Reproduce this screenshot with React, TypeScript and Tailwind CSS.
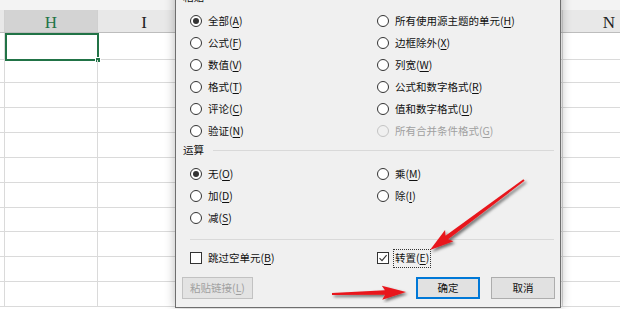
import React from 'react';

const cols = ['G', 'H', 'I', 'J', 'K', 'L', 'M', 'N'];
const rowHeights = ['h-[27px]', 'h-[23px]', 'h-[25px]', 'h-[25px]', 'h-[25px]', 'h-[25px]', 'h-[25px]', 'h-[24px]', 'h-[25px]', 'h-[25px]', 'h-[25px]'];

const pasteLeft = [
  { t: '全部', k: 'A', on: true },
  { t: '公式', k: 'F' },
  { t: '数值', k: 'V' },
  { t: '格式', k: 'T' },
  { t: '评论', k: 'C' },
  { t: '验证', k: 'N' },
];
const pasteRight = [
  { t: '所有使用源主题的单元', k: 'H' },
  { t: '边框除外', k: 'X' },
  { t: '列宽', k: 'W' },
  { t: '公式和数字格式', k: 'R' },
  { t: '值和数字格式', k: 'U' },
  { t: '所有合并条件格式', k: 'G', off: true },
];

function Label({ t, k }: { t: string; k: string }) {
  return (
    <span>
      {t}(<span className="underline underline-offset-[1.5px]">{k}</span>)
    </span>
  );
}

function Radio({ on, off }: { on?: boolean; off?: boolean }) {
  return (
    <span
      className={`w-[12px] h-[12px] shrink-0 rounded-full border flex items-center justify-center ${
        off ? 'border-[#c4c4c4] bg-[#f0f0f0]' : 'border-[#333333] bg-white'
      }`}
    >
      {on && <span className="w-[6px] h-[6px] rounded-full bg-[#333333]" />}
    </span>
  );
}

function RadioRow({ t, k, on, off }: { t: string; k: string; on?: boolean; off?: boolean }) {
  return (
    <div className={`h-[22px] flex items-center gap-[6px] ${off ? 'text-[#a0a0a0]' : 'text-[#111111]'}`}>
      <Radio on={on} off={off} />
      <Label t={t} k={k} />
    </div>
  );
}

function Check({ on }: { on?: boolean }) {
  return (
    <span className="w-[12px] h-[12px] shrink-0 border border-[#333333] bg-white flex items-center justify-center">
      {on && (
        <svg width="10" height="10" viewBox="0 0 10 10">
          <path d="M1.5 5.2 L4 7.6 L8.6 2.2" fill="none" stroke="#333" strokeWidth="1.1" />
        </svg>
      )}
    </span>
  );
}

function Heading({ t }: { t: string }) {
  return (
    <div className="h-[14px] flex items-center gap-[9px] pl-[7px] pr-[6px] text-[#111111]">
      <span>{t}</span>
      <span className="flex-1 h-px bg-[#d9d9d9]" />
    </div>
  );
}

function arrow(x1: number, y1: number, x2: number, y2: number) {
  const len = Math.hypot(x2 - x1, y2 - y1);
  const dx = (x2 - x1) / len, dy = (y2 - y1) / len;
  const nx = -dy, ny = dx;
  const hl = 21, hw = 7, sw = 2.2, tw = 1;
  const bx = x2 - dx * hl, by = y2 - dy * hl;
  const wx = x2 - dx * (hl + 3), wy = y2 - dy * (hl + 3);
  const p = [
    [x1 + nx * tw, y1 + ny * tw],
    [bx + nx * sw, by + ny * sw],
    [wx + nx * hw, wy + ny * hw],
    [x2, y2],
    [wx - nx * hw, wy - ny * hw],
    [bx - nx * sw, by - ny * sw],
    [x1 - nx * tw, y1 - ny * tw],
  ];
  return p.map(q => q.join(',')).join(' ');
}

export default function App() {
  return (
    <div className="relative w-[620px] h-[309px] overflow-hidden bg-white font-['Noto_Sans_CJK_SC',sans-serif] text-[10.5px]">
      {/* sheet */}
      <div className="flex flex-col">
        <div className="h-[10px] bg-[#f3f3f3]" />
        <div className="flex h-[23px] ml-[-88px] border-b border-[#bdbdbd]">
          {cols.map(c => (
            <div
              key={c}
              className={`w-[93px] shrink-0 border-r border-[#d0d0d0] flex items-center justify-center pt-[3px] font-['Liberation_Serif',serif] text-[17px] ${
                c === 'H' ? 'bg-[#d3d3d3] text-[#217346]' : 'bg-[#e8e8e8] text-[#222222]'
              }`}
            >
              {c === 'G' ? '' : c}
            </div>
          ))}
        </div>
        {rowHeights.map((h, r) => (
          <div key={r} className={`flex ml-[-88px] border-b border-[#dadada] ${h}`}>
            {cols.map(c => (
              <div key={c} className="relative w-[93px] shrink-0 border-r border-[#dadada]">
                {r === 0 && c === 'H' && (
                  <div className="absolute left-0 top-0 w-[94px] h-[28px] border-2 border-[#217346]">
                    <span className="absolute right-[-4px] bottom-[-4px] w-[6px] h-[6px] bg-[#217346] border border-white" />
                  </div>
                )}
              </div>
            ))}
          </div>
        ))}
      </div>

      {/* paste special dialog */}
      <div className="absolute left-[175px] top-[-12px] w-[386px] h-[320px] bg-[#f0f0f0] border-x border-b border-[#6e6e6e] shadow-[0_0_10px_rgba(0,0,0,0.28)] flex flex-col">
        <div className="mt-[2px]">
          <Heading t="粘贴" />
        </div>
        <div className="mt-[6px] pl-[14px] grid grid-cols-[187px_1fr]">
          <div className="flex flex-col">
            {pasteLeft.map(o => <RadioRow key={o.k} {...o} />)}
          </div>
          <div className="flex flex-col">
            {pasteRight.map(o => <RadioRow key={o.k} {...o} />)}
          </div>
        </div>
        <div className="mt-[1px]">
          <Heading t="运算" />
        </div>
        <div className="mt-[6px] pl-[14px] grid grid-cols-[187px_1fr]">
          <div className="flex flex-col">
            <RadioRow t="无" k="O" on />
            <RadioRow t="加" k="D" />
            <RadioRow t="减" k="S" />
          </div>
          <div className="flex flex-col">
            <RadioRow t="乘" k="M" />
            <RadioRow t="除" k="I" />
          </div>
        </div>
        <div className="mt-[10px] ml-[14px] mr-[6px] h-px bg-[#d9d9d9]" />
        <div className="mt-[7px] pl-[14px] grid grid-cols-[187px_1fr] text-[#111111]">
          <div className="h-[22px] flex items-center gap-[4px]">
            <Check />
            <span className="h-[19px] px-[1px] border border-transparent flex items-center">
              <Label t="跳过空单元" k="B" />
            </span>
          </div>
          <div className="h-[22px] flex items-center gap-[4px]">
            <Check on />
            <span className="h-[19px] px-[1px] border border-dotted border-[#333333] flex items-center">
              <Label t="转置" k="E" />
            </span>
          </div>
        </div>
        <div className="mt-[8px] flex pl-[6px] pr-[5px]">
          <button className="w-[71px] h-[22px] bg-[#e3e3e3] border border-[#c2c2c2] text-[#a0a0a0] flex items-center justify-center">
            <Label t="粘贴链接" k="L" />
          </button>
          <div className="ml-auto flex gap-[11px]">
            <button className="w-[64px] h-[22px] bg-[#e1e1e1] border-2 border-[#0078d7] text-[#111111] flex items-center justify-center">
              确定
            </button>
            <button className="w-[64px] h-[22px] bg-[#e1e1e1] border border-[#adadad] text-[#111111] flex items-center justify-center">
              取消
            </button>
          </div>
        </div>
      </div>

      {/* annotation arrows */}
      <svg className="absolute inset-0 pointer-events-none" width="620" height="309">
        <defs>
          <filter id="sh" x="-20%" y="-20%" width="140%" height="140%">
            <feDropShadow dx="2" dy="2" stdDeviation="1.4" floodColor="#000" floodOpacity="0.55" />
          </filter>
        </defs>
        <polygon points={arrow(524, 180, 430, 250)} fill="#e8161c" filter="url(#sh)" />
        <polygon points={arrow(332, 294, 406, 292)} fill="#e8161c" filter="url(#sh)" />
      </svg>
    </div>
  );
}
